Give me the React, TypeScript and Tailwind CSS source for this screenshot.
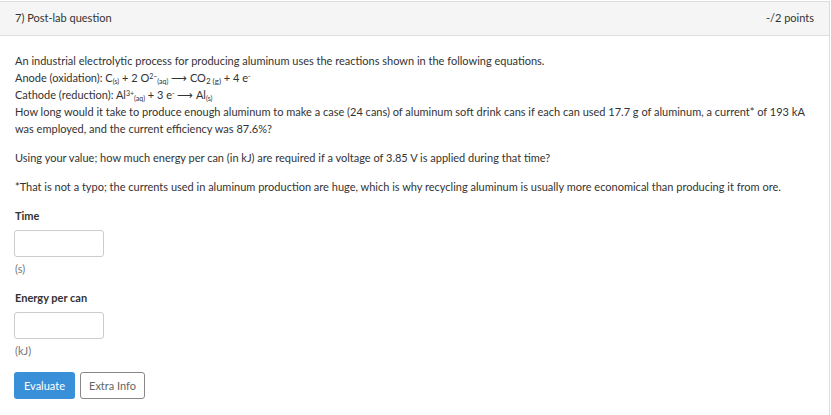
import { useState } from "react";

export default function App() {
	const [time, setTime] = useState("");
	const [energy, setEnergy] = useState("");

	return (
		<div
			className="w-[831px] h-[415px] bg-white text-[#333] text-[11px] leading-[17px] overflow-hidden"
			style={{ fontFamily: "Lato, 'Noto Sans', sans-serif" }}
		>
			<div className="mt-px mr-[1px] border-t border-r border-[#dddddd] h-[414px]">
				{/* header */}
				<div className="flex justify-between items-center h-[34px] pb-[2px] px-[15px] bg-[#f5f5f5] border-b border-[#dddddd]">
					<span>7) Post-lab question</span>
					<span>-/2 points</span>
				</div>

				<div className="px-[15px] pt-[16px]">
					<p>An industrial electrolytic process for producing aluminum uses the reactions shown in the following equations.</p>
					<p>
						Anode (oxidation): C<sub className="text-[7px]">(s)</sub> + 2 O
						<sup className="text-[7px]">2−</sup>
						<sub className="text-[7px]">(aq)</sub> ⟶ CO<sub className="text-[8px]">2 (g)</sub> + 4 e
						<sup className="text-[7px]">-</sup>
					</p>
					<p>
						Cathode (reduction): Al<sup className="text-[7px]">3+</sup>
						<sub className="text-[7px]">(aq)</sub> + 3 e<sup className="text-[7px]">-</sup> ⟶ Al
						<sub className="text-[7px]">(s)</sub>
					</p>
					<p>
						How long would it take to produce enough aluminum to make a case (24 cans) of aluminum soft drink cans if each can used 17.7 g of aluminum, a current* of 193 kA was employed, and the current efficiency was 87.6%?
					</p>
					<p className="mt-[12px]">
						Using your value; how much energy per can (in kJ) are required if a voltage of 3.85 V is applied during that time?
					</p>
					<p className="mt-[12px]">
						*That is not a typo; the currents used in aluminum production are huge, which is why recycling aluminum is usually more economical than producing it from ore.
					</p>

					<div className="mt-[12px] -ml-px flex flex-col">
						<label className="ml-px font-bold text-[11px]">Time</label>
						<input
							value={time}
							onChange={(e) => setTime(e.target.value)}
							className="mt-[6px] w-[90px] h-[27px] border border-[#cccccc] rounded-[3px] px-2 outline-none"
						/>
						<span className="mt-[3px] ml-px text-[#777]">(s)</span>

						<label className="mt-[12px] ml-px font-bold text-[11px]">Energy per can</label>
						<input
							value={energy}
							onChange={(e) => setEnergy(e.target.value)}
							className="mt-[6px] w-[90px] h-[27px] border border-[#cccccc] rounded-[3px] px-2 outline-none"
						/>
						<span className="mt-[3px] ml-px text-[#777]">(kJ)</span>

						<div className="mt-[13px] flex gap-[5px]">
							<button
								type="button"
								className="h-[27px] w-[61px] bg-[#3a8fd9] text-white rounded-[3px]"
							>
								Evaluate
							</button>
							<button
								type="button"
								className="h-[27px] w-[65px] border border-[#888] text-[#666] rounded-[3px] bg-white"
							>
								Extra Info
							</button>
						</div>
					</div>
				</div>
			</div>
		</div>
	);
}
